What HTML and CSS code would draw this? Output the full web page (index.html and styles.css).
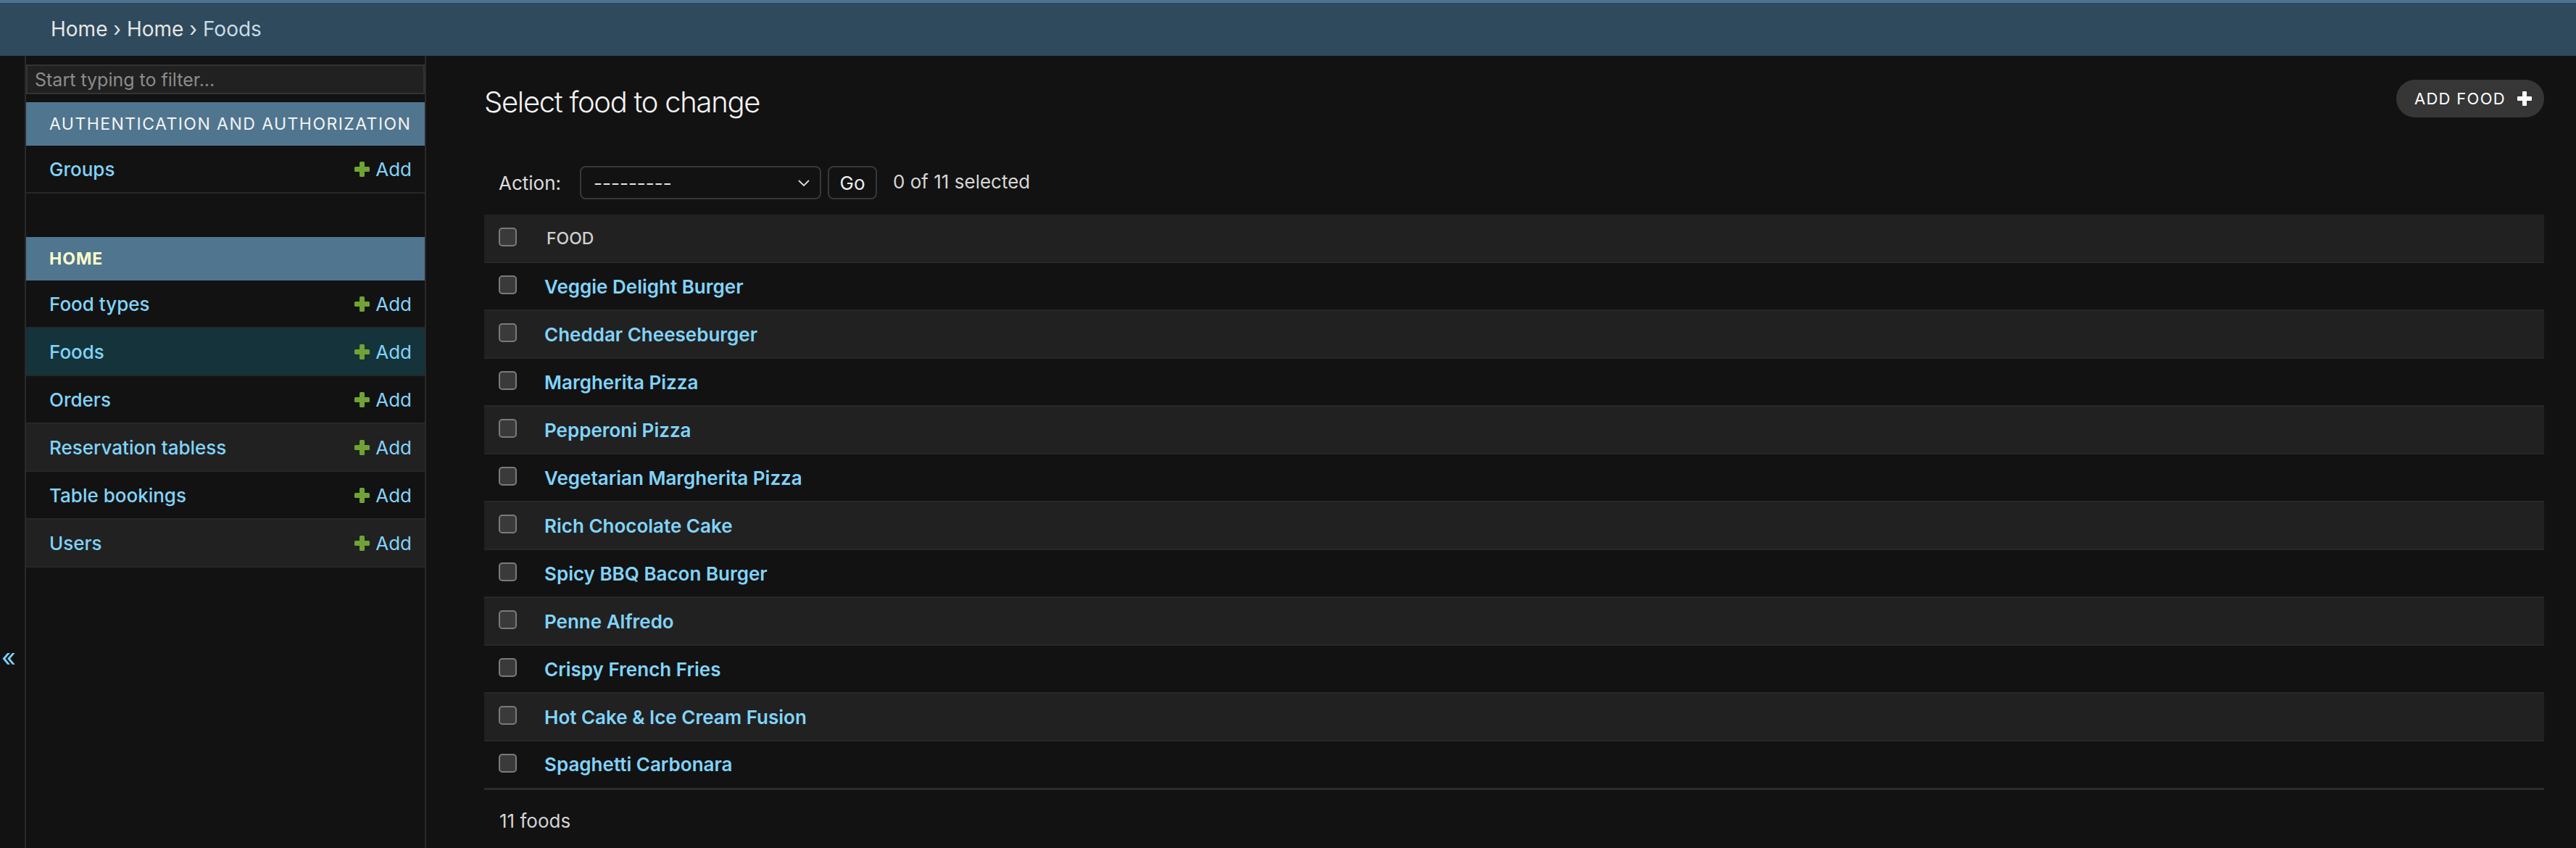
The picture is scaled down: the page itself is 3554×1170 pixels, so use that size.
FILE: index.html
```html
<!DOCTYPE html>
<html lang="en">
<head>
<meta charset="utf-8">
<title>Select food to change</title>
<link rel="stylesheet" href="styles.css">
</head>
<body>
<nav class="breadcrumbs"><a href="#">Home</a> <span class="sep">›</span> <a href="#">Home</a> <span class="sep">›</span> <span class="here">Foods</span></nav>
<div class="main">
  <div class="toggle"><span class="toggle-glyph">«</span></div>
  <nav class="sidebar">
    <input class="filter" type="search" placeholder="Start typing to filter...">
    <div class="module">
      <div class="caption">Authentication and Authorization</div>
      <div class="row"><a class="model" href="#">Groups</a><a class="add" href="#"><svg class="plus" viewBox="0 0 21 21"><rect x="7" y="0" width="7" height="21" rx="1.5"/><rect x="0" y="7" width="21" height="7" rx="1.5"/></svg>Add</a></div>
    </div>
    <div class="module">
      <div class="caption current">Home</div>
      <div class="row"><a class="model" href="#">Food types</a><a class="add" href="#"><svg class="plus" viewBox="0 0 21 21"><rect x="7" y="0" width="7" height="21" rx="1.5"/><rect x="0" y="7" width="21" height="7" rx="1.5"/></svg>Add</a></div>
      <div class="row selected"><a class="model" href="#">Foods</a><a class="add" href="#"><svg class="plus" viewBox="0 0 21 21"><rect x="7" y="0" width="7" height="21" rx="1.5"/><rect x="0" y="7" width="21" height="7" rx="1.5"/></svg>Add</a></div>
      <div class="row"><a class="model" href="#">Orders</a><a class="add" href="#"><svg class="plus" viewBox="0 0 21 21"><rect x="7" y="0" width="7" height="21" rx="1.5"/><rect x="0" y="7" width="21" height="7" rx="1.5"/></svg>Add</a></div>
      <div class="row alt"><a class="model" href="#">Reservation tabless</a><a class="add" href="#"><svg class="plus" viewBox="0 0 21 21"><rect x="7" y="0" width="7" height="21" rx="1.5"/><rect x="0" y="7" width="21" height="7" rx="1.5"/></svg>Add</a></div>
      <div class="row"><a class="model" href="#">Table bookings</a><a class="add" href="#"><svg class="plus" viewBox="0 0 21 21"><rect x="7" y="0" width="7" height="21" rx="1.5"/><rect x="0" y="7" width="21" height="7" rx="1.5"/></svg>Add</a></div>
      <div class="row alt"><a class="model" href="#">Users</a><a class="add" href="#"><svg class="plus" viewBox="0 0 21 21"><rect x="7" y="0" width="7" height="21" rx="1.5"/><rect x="0" y="7" width="21" height="7" rx="1.5"/></svg>Add</a></div>
    </div>
  </nav>
  <div class="content">
    <div class="title-row">
      <h1>Select food to change</h1>
      <a class="addbtn" href="#">Add food <svg class="plus-white" viewBox="0 0 20 20"><rect x="7" y="0" width="6" height="20" rx="1"/><rect x="0" y="7" width="20" height="6" rx="1"/></svg></a>
    </div>
    <div class="actions">
      <span class="label">Action:</span>
      <div class="select"><span>---------</span><svg class="chev" viewBox="0 0 16 9"><path d="M1 1 L8 8 L15 1"/></svg></div>
      <button class="go" type="button">Go</button>
      <span class="counter">0 of 11 selected</span>
    </div>
    <table class="results">
      <thead><tr><th class="cbcol"><input class="cb" type="checkbox"></th><th class="head">Food</th></tr></thead>
      <tbody>
        <tr><td class="cbcol"><input class="cb" type="checkbox"></td><th><a href="#">Veggie Delight Burger</a></th></tr>
        <tr><td class="cbcol"><input class="cb" type="checkbox"></td><th><a href="#">Cheddar Cheeseburger</a></th></tr>
        <tr><td class="cbcol"><input class="cb" type="checkbox"></td><th><a href="#">Margherita Pizza</a></th></tr>
        <tr><td class="cbcol"><input class="cb" type="checkbox"></td><th><a href="#">Pepperoni Pizza</a></th></tr>
        <tr><td class="cbcol"><input class="cb" type="checkbox"></td><th><a href="#">Vegetarian Margherita Pizza</a></th></tr>
        <tr><td class="cbcol"><input class="cb" type="checkbox"></td><th><a href="#">Rich Chocolate Cake</a></th></tr>
        <tr><td class="cbcol"><input class="cb" type="checkbox"></td><th><a href="#">Spicy BBQ Bacon Burger</a></th></tr>
        <tr><td class="cbcol"><input class="cb" type="checkbox"></td><th><a href="#">Penne Alfredo</a></th></tr>
        <tr><td class="cbcol"><input class="cb" type="checkbox"></td><th><a href="#">Crispy French Fries</a></th></tr>
        <tr><td class="cbcol"><input class="cb" type="checkbox"></td><th><a href="#">Hot Cake &amp; Ice Cream Fusion</a></th></tr>
        <tr><td class="cbcol"><input class="cb" type="checkbox"></td><th><a href="#">Spaghetti Carbonara</a></th></tr>
      </tbody>
    </table>
    <p class="paginator">11 foods</p>
  </div>
</div>
</body>
</html>
```
FILE: styles.css
```css
* { box-sizing: border-box; }
html, body { margin: 0; padding: 0; }
body {
  background: #121212;
  color: #e0e0e0;
  font-family: Inter, "Noto Sans", "Liberation Sans", sans-serif;
  font-size: 26px;
}
a { text-decoration: none; }

.breadcrumbs {
  display: block;
  height: 77px;
  border-top: 4px solid #4d7390;
  background: #2f4a5c;
  padding: 0 0 0 70px;
  line-height: 73px;
  font-size: 28px;
  color: #e2e2e2;
}
.breadcrumbs a { color: #e6e6e6; }
.breadcrumbs .sep { color: #dde4e8; }
.breadcrumbs .here { color: #c7dce8; }

.main {
  display: flex;
  min-height: calc(100vh - 77px);
}

.toggle {
  flex: 0 0 36px;
  width: 36px;
  border-right: 2px solid #2a2a2a;
  background: #121212;
  padding-top: 810px;
}
.toggle-glyph {
  display: block;
  width: 24px;
  text-align: center;
  color: #81d4fa;
  font-size: 34px;
  line-height: 40px;
}

.sidebar {
  flex: 0 0 552px;
  width: 552px;
  border-right: 2px solid #2a2a2a;
  padding-top: 12px;
}
.filter {
  display: block;
  width: 550px;
  height: 41px;
  margin: 0 0 11px;
  background: #212121;
  border: 2px solid #333;
  color: #ddd;
  font-family: inherit;
  font-size: 25px;
  padding: 0 10px;
  outline: none;
}
.filter::placeholder { color: #8c8c8c; }

.module { margin-bottom: 60px; width: 550px; }
.caption {
  height: 60px;
  background: #50758f;
  color: #f4f4f4;
  font-size: 23px;
  letter-spacing: 1.45px;
  text-transform: uppercase;
  display: flex;
  align-items: center;
  padding-left: 32px;
}
.caption.current { color: #ffffcc; font-weight: 700; letter-spacing: 1px; }

.row {
  height: 66px;
  border-bottom: 2px solid #272727;
  display: flex;
  align-items: center;
  justify-content: space-between;
  padding: 0 18px 0 32px;
  background: #121212;
}
.row.alt { background: #212121; }
.row.selected { background: #15333a; }
.model { color: #81d4fa; font-weight: 500; font-size: 26px; }
.add {
  color: #81d4fa;
  font-size: 26px;
  display: flex;
  align-items: center;
  gap: 8px;
}
.plus { width: 21px; height: 21px; fill: #6fa336; }

.content {
  flex: 1 1 auto;
  padding: 33px 44px 0 80px;
}
.title-row {
  display: flex;
  justify-content: space-between;
  align-items: flex-start;
  margin-bottom: 43px;
}
h1 {
  margin: 7px 0 0;
  font-size: 40px;
  line-height: 48px;
  font-weight: 300;
  letter-spacing: -1.3px;
  color: #f2f2f2;
}
.addbtn {
  display: flex;
  align-items: center;
  gap: 16px;
  height: 52px;
  padding: 0 17px 0 25px;
  border-radius: 26px;
  background: #363636;
  color: #fff;
  font-size: 22px;
  letter-spacing: 1.3px;
  text-transform: uppercase;
}
.plus-white { width: 20px; height: 20px; fill: #fff; }

.actions {
  height: 88px;
  padding: 0 20px;
  display: flex;
  align-items: center;
  color: #dcdcdc;
  font-size: 26px;
}
.actions .label { margin-right: 26px; }
.select {
  width: 333px;
  height: 46px;
  border: 2px solid #383838;
  border-radius: 8px;
  background: #121212;
  display: flex;
  align-items: center;
  justify-content: space-between;
  padding: 0 14px 0 17px;
  color: #e6e6e6;
  font-size: 26px;
}
.chev { width: 16px; height: 9px; fill: none; stroke: #ddd; stroke-width: 1.8; }
.go {
  margin-left: 9px;
  width: 68px;
  height: 46px;
  border: 2px solid #383838;
  border-radius: 8px;
  background: #121212;
  color: #eee;
  font-family: inherit;
  font-size: 26px;
  padding: 0;
}
.counter { margin-left: 22px; color: #d6d6d6; margin-top: -4px; }

.results {
  width: 100%;
  border-collapse: collapse;
}
.results tr { height: 66px; border-bottom: 2px solid #272727; }
.results thead tr { background: #212121; }
.results tbody tr:nth-child(even) { background: #212121; }
.results tbody tr:last-child { border-bottom: 3px solid #2c2c2c; }
.results td, .results th {
  padding: 0;
  text-align: left;
  vertical-align: middle;
}
.cbcol { width: 83px; padding-left: 20px !important; }
.cb {
  appearance: none;
  -webkit-appearance: none;
  display: block;
  margin: -4px 0 0;
  width: 25px;
  height: 26px;
  border: 2px solid #7a7a7a;
  border-radius: 5px;
  background: #3a3a3a;
}
.head {
  font-size: 23px;
  font-weight: 500;
  color: #d0d0d0;
  text-transform: uppercase;
  padding-left: 3px !important;
}
.results tbody th a {
  color: #81d4fa;
  font-size: 26px;
  font-weight: 600;
}
.paginator {
  margin: 0;
  padding: 28px 20px 0 21px;
  line-height: 30px;
  font-size: 26px;
  color: #d4d4d4;
}
```
